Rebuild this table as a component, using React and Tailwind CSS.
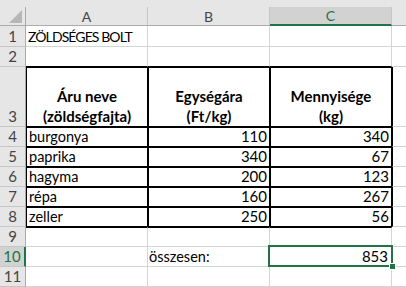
import React from "react";

// Spreadsheet-style grid: row header column + columns A, B, C and a sliver of D.
const HDR = "bg-[#e6e6e6]";

function RowHead({ n, h, selected }) {
  return (
    <div
      className={
        selected
          ? `w-[26px] ${h} shrink-0 bg-[#d2d2d2] border-r-2 border-r-[#217346] border-b border-b-[#c6c6c6] flex items-end justify-center text-[#217346] leading-[19px]`
          : `w-[26px] ${h} shrink-0 ${HDR} border-r border-r-[#ababab] border-b border-b-[#c6c6c6] flex items-end justify-center text-[#444] leading-[19px]`
      }
    >
      {n}
    </div>
  );
}

function Cell({ cls, children }) {
  return <div className={`shrink-0 flex items-end overflow-visible whitespace-nowrap leading-[19px] ${cls}`}>{children}</div>;
}

const plain = "border-r border-b border-[#d4d4d4]";
const boxed = "border border-black";
const dPlain = "flex-1 border-b border-[#d4d4d4]";
const dBoxed = "flex-1 border-l border-l-black border-b border-b-[#d4d4d4]";

const items = [
  ["burgonya", 110, 340],
  ["paprika", 340, 67],
  ["hagyma", 200, 123],
  ["répa", 160, 267],
  ["zeller", 250, 56],
];

export default function App() {
  return (
    <div className="relative w-[406px] h-[287px] overflow-hidden bg-white text-black text-[15px] font-['Lato',sans-serif]">
      <div className={`h-[7px] ${HDR}`} />

      {/* column headers */}
      <div className="flex h-[19px]">
        <div className={`relative w-[26px] shrink-0 ${HDR} border-r border-r-[#ababab] border-b border-b-[#ababab]`}>
          <svg className="absolute left-[9px] top-[3px]" width="13" height="13" viewBox="0 0 13 13">
            <polygon points="13,0 13,13 0,13" fill="#b6b6b6" />
          </svg>
        </div>
        <div className={`w-[122px] shrink-0 ${HDR} border-r border-r-[#c6c6c6] border-b border-b-[#ababab] flex items-center justify-center text-[#444] text-[14px]`}>A</div>
        <div className={`w-[122px] shrink-0 ${HDR} border-r border-r-[#c6c6c6] border-b border-b-[#ababab] flex items-center justify-center text-[#444] text-[14px]`}>B</div>
        <div className="w-[122px] shrink-0 bg-[#d2d2d2] border-r border-r-[#c6c6c6] border-b-2 border-b-[#217346] flex items-center justify-center text-[#217346] text-[14px]">C</div>
        <div className={`flex-1 ${HDR} border-b border-b-[#ababab]`} />
      </div>

      {/* row 1 */}
      <div className="flex h-[21px]">
        <RowHead n={1} h="h-[21px]" />
        <Cell cls={`w-[122px] pl-[2px] text-[14px] tracking-[-0.9px] ${plain}`}>ZÖLDSÉGES BOLT</Cell>
        <Cell cls={`w-[122px] ${plain}`} />
        <Cell cls={`w-[122px] ${plain}`} />
        <Cell cls={dPlain} />
      </div>

      {/* row 2 */}
      <div className="flex h-[20px]">
        <RowHead n={2} h="h-[20px]" />
        <Cell cls="w-[122px] border-r border-r-[#d4d4d4] border-b border-b-black" />
        <Cell cls="w-[122px] border-r border-r-[#d4d4d4] border-b border-b-black" />
        <Cell cls="w-[122px] border-r border-r-[#d4d4d4] border-b border-b-black" />
        <Cell cls={dPlain} />
      </div>

      {/* row 3: table head */}
      <div className="flex h-[60px]">
        <RowHead n={3} h="h-[60px]" />
        <Cell cls={`w-[122px] ${boxed} justify-center text-center font-bold leading-[20px]`}>
          <div>Áru neve<br />(zöldségfajta)</div>
        </Cell>
        <Cell cls={`w-[122px] ${boxed} justify-center text-center font-bold leading-[20px]`}>
          <div>Egységára<br />(Ft/kg)</div>
        </Cell>
        <Cell cls={`w-[122px] ${boxed} justify-center text-center font-bold leading-[20px]`}>
          <div>Mennyisége<br />(kg)</div>
        </Cell>
        <Cell cls={dBoxed} />
      </div>

      {/* rows 4-8 */}
      {items.map(([name, price, qty], i) => (
        <div key={name} className="flex h-[20px]">
          <RowHead n={i + 4} h="h-[20px]" />
          <Cell cls={`w-[122px] pl-[2px] text-[14.5px] ${boxed}`}>{name}</Cell>
          <Cell cls={`w-[122px] pr-[2px] justify-end ${boxed}`}>{price}</Cell>
          <Cell cls={`w-[122px] pr-[2px] justify-end ${boxed}`}>{qty}</Cell>
          <Cell cls={dBoxed} />
        </div>
      ))}

      {/* row 9 */}
      <div className="flex h-[20px]">
        <RowHead n={9} h="h-[20px]" />
        <Cell cls="w-[122px] border-t border-t-black border-r border-b border-r-[#d4d4d4] border-b-[#d4d4d4]" />
        <Cell cls="w-[122px] border-t border-t-black border-r border-b border-r-[#d4d4d4] border-b-[#d4d4d4]" />
        <Cell cls="w-[122px] border-t border-t-black border-r border-b border-r-[#d4d4d4] border-b-[#d4d4d4]" />
        <Cell cls={dPlain} />
      </div>

      {/* row 10 */}
      <div className="flex h-[20px]">
        <RowHead n={10} h="h-[20px]" selected />
        <Cell cls={`w-[122px] ${plain}`} />
        <Cell cls={`w-[122px] pl-[1px] text-[14.5px] ${plain}`}>összesen:</Cell>
        <Cell cls={`w-[122px] pr-[3px] justify-end ${plain}`}>853</Cell>
        <Cell cls={dPlain} />
      </div>

      {/* row 11 */}
      <div className="flex h-[20px]">
        <RowHead n={11} h="h-[20px]" />
        <Cell cls={`w-[122px] ${plain}`} />
        <Cell cls={`w-[122px] ${plain}`} />
        <Cell cls={`w-[122px] ${plain}`} />
        <Cell cls={dPlain} />
      </div>

      {/* active cell outline and fill handle */}
      <div className="absolute left-[268px] top-[245px] w-[125px] h-[22px] border-2 border-[#217346] pointer-events-none" />
      <div className="absolute left-[389px] top-[263px] w-[7px] h-[7px] bg-[#217346] border border-white" />
    </div>
  );
}
